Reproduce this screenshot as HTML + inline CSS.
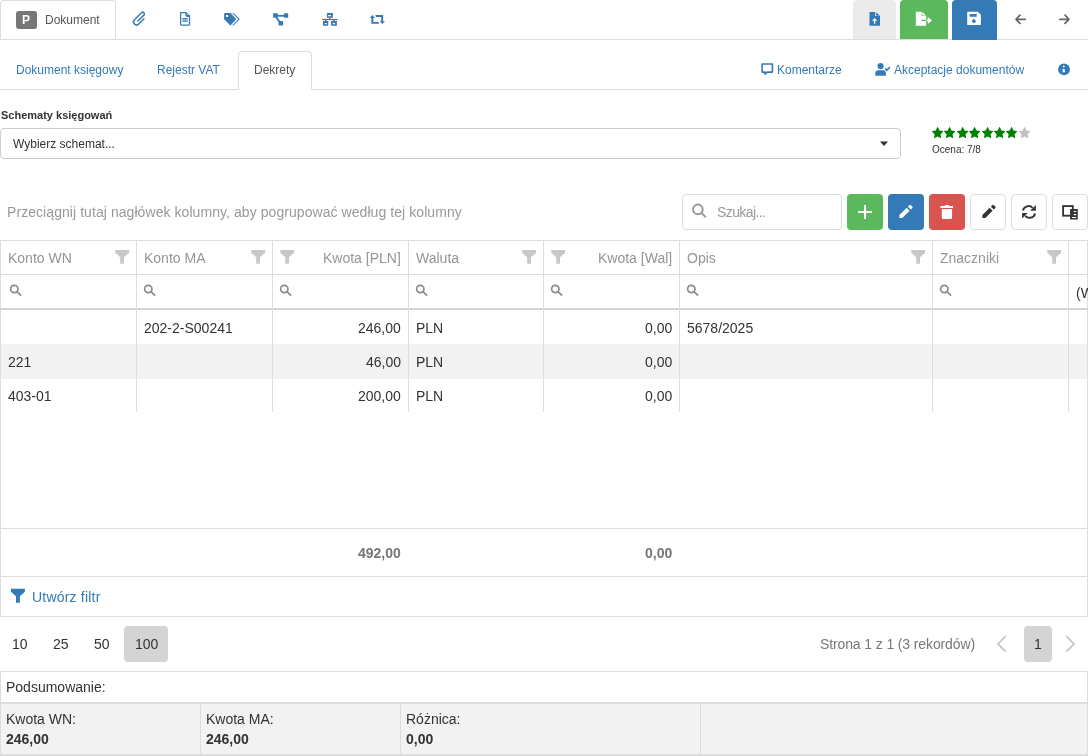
<!DOCTYPE html>
<html><head><meta charset="utf-8">
<style>
*{box-sizing:border-box;margin:0;padding:0}
html,body{width:1088px;height:756px;overflow:hidden;background:#fff;-webkit-font-smoothing:antialiased;font-family:"Liberation Sans",sans-serif;color:#333}
.a{position:absolute}
.t{position:absolute;white-space:nowrap;line-height:1;will-change:transform}
.f12{font-size:12px}
.f14{font-size:14px}
.blue{color:#337ab7}
.hl{position:absolute;height:1px;background:#ddd}
.vl{position:absolute;width:1px;background:#ddd}
.hd{color:#959595}
svg{position:absolute;display:block;overflow:visible}
</style></head><body>
<div class="hl" style="left:0;top:39px;width:1088px"></div>
<div class="a" style="left:0;top:0;width:116px;height:40px;border:1px solid #ddd;border-bottom:none;border-radius:4px 4px 0 0;background:#fff"></div>
<div class="hl" style="left:0;top:39px;width:116px"></div>
<div class="a" style="left:16px;top:11px;width:21px;height:18px;background:#777;border-radius:3px"></div>
<div class="t" style="left:22px;top:14px;font-size:12px;font-weight:bold;color:#fff">P</div>
<div class="t f12" style="left:45px;top:14px;color:#555">Dokument</div>
<svg style="left:130px;top:9px" width="19" height="19" viewBox="0 0 19 19"><g transform="translate(10.1,9.4) rotate(-45) scale(1.13)"><path fill="none" stroke="#337ab7" stroke-width="1.3" stroke-linecap="round" d="M2.2 2.7H-4.4A2.7 2.7 0 0 1 -4.4 -2.7H4.4A1.5 1.5 0 0 1 4.4 0.3H-3"/></g></svg>
<svg style="left:176px;top:9px" width="18" height="19" viewBox="0 0 18 19"><path fill="none" stroke="#337ab7" stroke-width="1.25" stroke-linejoin="round" d="M4.6 3.6h5.2l3.7 3.7v8.2q0 0.5-0.5 0.5h-7.9q-0.5 0-0.5-0.5z"/><path fill="#337ab7" d="M9.4 3.4h1.2l3.4 3.4v1.2h-2.6q-2 0-2-2z"/><circle cx="11.5" cy="5.5" r="0.55" fill="#fff"/><rect x="6.3" y="9.1" width="5.5" height="1.1" fill="#337ab7"/><rect x="6.3" y="11.6" width="5.5" height="1.1" fill="#337ab7"/><rect x="6.5" y="10.2" width="5.1" height="1.4" fill="#337ab7" opacity="0.55"/></svg>
<svg style="left:220px;top:9px" width="24" height="20" viewBox="0 0 24 20"><path fill="#337ab7" fill-rule="evenodd" d="M4.1 5Q4.1 4 5.1 4H10.6L16.2 10.3L10.5 16.6L4.1 10.3ZM5.9 5.9V8.1H8.1V5.9Z"/><path fill="#337ab7" d="M12.2 4H13.6L19.7 10.3L13.4 16.6H12L18.2 10.3Z"/></svg>
<svg style="left:270px;top:10px" width="22" height="18" viewBox="0 0 22 18"><g fill="#337ab7"><rect x="3.1" y="3.2" width="4.8" height="4.5" rx="0.6"/><rect x="13.9" y="3.2" width="4.3" height="4.5" rx="0.6"/><rect x="7.5" y="4.9" width="6.5" height="1.8"/><rect x="8.5" y="11.1" width="4.5" height="4.5" rx="0.6"/></g><path d="M6.3 7.2L9.3 11.5" stroke="#337ab7" stroke-width="1.8"/></svg>
<svg style="left:319px;top:10px" width="22" height="18" viewBox="0 0 22 18"><path fill="#337ab7" fill-rule="evenodd" d="M7.9 3.1h6v4.6h-6zM9.2 4.9v1.4h2.8v-1.4z"/><rect x="10.1" y="7.5" width="1.4" height="1.6" fill="#337ab7"/><rect x="3.1" y="8.9" width="15.4" height="1.2" fill="#337ab7"/><rect x="6" y="10" width="1.4" height="1.2" fill="#337ab7"/><rect x="14.3" y="10" width="1.4" height="1.2" fill="#337ab7"/><path fill="#337ab7" fill-rule="evenodd" d="M4 11h5.2v4.7h-5.2zM5.7 12.9v1.4h2.2v-1.4zM12.1 11h5.8v4.7h-5.8zM13.8 12.9v1.4h2.2v-1.4z"/></svg>
<svg style="left:366px;top:10px" width="24" height="18" viewBox="0 0 24 18"><path fill="#337ab7" d="M3.8 8L6.4 5L9 8H7.3V11.9H12.3L13.2 13.8H5.3V8Z"/><path fill="#337ab7" d="M9.3 5H17.1V11.3H19L16.3 14.1L13.6 11.3H15.2V6.9H10.2Z"/></svg>
<div class="a" style="left:853px;top:0;width:43px;height:39px;background:#ebebeb;border-radius:4px 4px 0 0"></div>
<div class="a" style="left:900px;top:0;width:48px;height:39px;background:#5cb85c;border-radius:4px 4px 0 0"></div>
<div class="a" style="left:952px;top:0;width:45px;height:40px;background:#337ab7;border-radius:4px 4px 0 0"></div>
<svg style="left:864px;top:8px" width="22" height="22" viewBox="0 0 22 22"><path fill="#337ab7" d="M5.5 3.9h5.6v4.2h4.9v9.1q0 0.5-0.5 0.5h-9.5q-0.5 0-0.5-0.5z"/><path fill="#337ab7" d="M12.1 4.2l3.9 3.5h-3.9z"/><path fill="#fff" d="M10.6 9.9l2.6 2.9h-1.9v2.9h-1.4v-2.9h-1.9z"/></svg>
<svg style="left:912px;top:8px" width="24" height="22" viewBox="0 0 24 22"><path fill="#fff" d="M3.8 3.8h5.9v4.1h4.5v3.9h-4.9v1.3h4.9v4.6h-10.4z"/><path fill="#fff" d="M10.4 4l3.8 3.6h-3.8z"/><path fill="#fff" d="M14.2 11.8h1.6v-2.8l4.2 3.5-4.2 3.5v-2.9h-1.6z"/></svg>
<svg style="left:963px;top:8px" width="22" height="22" viewBox="0 0 22 22"><path fill="#fff" fill-rule="evenodd" d="M4.7 3.8h10.2l3 3v9.6q0 0.5-0.5 0.5h-12.7q-0.5 0-0.5-0.5v-12.1q0-0.5 0.5-0.5zM6.7 6.1v2.6h7v-2.6zM10.9 11.2a1.9 1.9 0 1 0 0.01 0z"/></svg>
<svg style="left:1012px;top:12px" width="16" height="14" viewBox="0 0 16 14"><path d="M13.2 7.3H4.2M8 3.2L4 7.3L8 11.4" stroke="#666" stroke-width="1.7" fill="none" stroke-linecap="round" stroke-linejoin="round"/></svg>
<svg style="left:1056px;top:12px" width="16" height="14" viewBox="0 0 16 14"><path d="M3.8 7.3H12.8M9 3.2L13 7.3L9 11.4" stroke="#666" stroke-width="1.7" fill="none" stroke-linecap="round" stroke-linejoin="round"/></svg>
<div class="hl" style="left:0;top:89px;width:1088px"></div>
<div class="t f12 blue" style="left:16px;top:64px">Dokument księgowy</div>
<div class="t f12 blue" style="left:157px;top:64px">Rejestr VAT</div>
<div class="a" style="left:238px;top:51px;width:74px;height:39px;border:1px solid #ddd;border-bottom:none;border-radius:4px 4px 0 0;background:#fff"></div>
<div class="t f12" style="left:254.3px;top:64px;color:#555">Dekrety</div>
<svg style="left:758px;top:60px" width="18" height="18" viewBox="0 0 18 18"><path fill="none" stroke="#337ab7" stroke-width="1.6" stroke-linejoin="round" d="M4.1 4h10.3v8.1h-5.2l-2.2 2v-2h-2.9z"/></svg>
<div class="t f12 blue" style="left:777px;top:64px">Komentarze</div>
<svg style="left:872px;top:60px" width="22" height="18" viewBox="0 0 22 18"><circle cx="8.6" cy="6.1" r="3.1" fill="#337ab7"/><path fill="#337ab7" d="M3.3 15.7v-2.2q0-3.3 3.3-3.3h4q3.3 0 3.3 3.3v2.2z"/><path d="M13.2 8.6l1.6 1.7l3-3.2" stroke="#337ab7" stroke-width="1.6" fill="none"/></svg>
<div class="t f12 blue" style="left:894px;top:64px">Akceptacje dokumentów</div>
<svg style="left:1054px;top:58px" width="20" height="22" viewBox="0 0 20 22"><circle cx="10" cy="11.45" r="5.9" fill="#337ab7"/><circle cx="9.75" cy="8.6" r="1" fill="#fff"/><path fill="#fff" d="M8.6 11.1H10.7V13.3H11.2V14.3H8.4V13.3H8.9V12.1H8.6Z"/></svg>
<div class="t" style="left:1px;top:110px;font-size:11px;font-weight:bold;color:#333">Schematy księgowań</div>
<div class="a" style="left:0;top:128px;width:901px;height:31px;border:1px solid #ccc;border-radius:4px"></div>
<div class="t f12" style="left:13px;top:138px;color:#333">Wybierz schemat...</div>
<svg style="left:879px;top:140px" width="10" height="7" viewBox="0 0 10 7"><path d="M1 1.5H9L5 6Z" fill="#333"/></svg>
<svg style="left:931.9px;top:127px" width="11.20" height="11.20" viewBox="0 32 1664 1587" preserveAspectRatio="none"><path transform="matrix(1 0 0 -1 0 1536)" fill="#008000" d="M1664 889q0 -22 -26 -48l-363 -354l86 -500q1 -7 1 -20q0 -21 -10.5 -35.5t-30.5 -14.5q-19 0 -40 12l-449 236l-449 -236q-22 -12 -40 -12q-21 0 -31.5 14.5t-10.5 35.5q0 6 2 20l86 500l-364 354q-25 27 -25 48q0 37 56 46l502 73l225 455q19 41 49 41t49 -41l225 -455
l502 -73q56 -9 56 -46z"/></svg>
<svg style="left:944.33px;top:127px" width="11.20" height="11.20" viewBox="0 32 1664 1587" preserveAspectRatio="none"><path transform="matrix(1 0 0 -1 0 1536)" fill="#008000" d="M1664 889q0 -22 -26 -48l-363 -354l86 -500q1 -7 1 -20q0 -21 -10.5 -35.5t-30.5 -14.5q-19 0 -40 12l-449 236l-449 -236q-22 -12 -40 -12q-21 0 -31.5 14.5t-10.5 35.5q0 6 2 20l86 500l-364 354q-25 27 -25 48q0 37 56 46l502 73l225 455q19 41 49 41t49 -41l225 -455
l502 -73q56 -9 56 -46z"/></svg>
<svg style="left:956.76px;top:127px" width="11.20" height="11.20" viewBox="0 32 1664 1587" preserveAspectRatio="none"><path transform="matrix(1 0 0 -1 0 1536)" fill="#008000" d="M1664 889q0 -22 -26 -48l-363 -354l86 -500q1 -7 1 -20q0 -21 -10.5 -35.5t-30.5 -14.5q-19 0 -40 12l-449 236l-449 -236q-22 -12 -40 -12q-21 0 -31.5 14.5t-10.5 35.5q0 6 2 20l86 500l-364 354q-25 27 -25 48q0 37 56 46l502 73l225 455q19 41 49 41t49 -41l225 -455
l502 -73q56 -9 56 -46z"/></svg>
<svg style="left:969.19px;top:127px" width="11.20" height="11.20" viewBox="0 32 1664 1587" preserveAspectRatio="none"><path transform="matrix(1 0 0 -1 0 1536)" fill="#008000" d="M1664 889q0 -22 -26 -48l-363 -354l86 -500q1 -7 1 -20q0 -21 -10.5 -35.5t-30.5 -14.5q-19 0 -40 12l-449 236l-449 -236q-22 -12 -40 -12q-21 0 -31.5 14.5t-10.5 35.5q0 6 2 20l86 500l-364 354q-25 27 -25 48q0 37 56 46l502 73l225 455q19 41 49 41t49 -41l225 -455
l502 -73q56 -9 56 -46z"/></svg>
<svg style="left:981.62px;top:127px" width="11.20" height="11.20" viewBox="0 32 1664 1587" preserveAspectRatio="none"><path transform="matrix(1 0 0 -1 0 1536)" fill="#008000" d="M1664 889q0 -22 -26 -48l-363 -354l86 -500q1 -7 1 -20q0 -21 -10.5 -35.5t-30.5 -14.5q-19 0 -40 12l-449 236l-449 -236q-22 -12 -40 -12q-21 0 -31.5 14.5t-10.5 35.5q0 6 2 20l86 500l-364 354q-25 27 -25 48q0 37 56 46l502 73l225 455q19 41 49 41t49 -41l225 -455
l502 -73q56 -9 56 -46z"/></svg>
<svg style="left:994.05px;top:127px" width="11.20" height="11.20" viewBox="0 32 1664 1587" preserveAspectRatio="none"><path transform="matrix(1 0 0 -1 0 1536)" fill="#008000" d="M1664 889q0 -22 -26 -48l-363 -354l86 -500q1 -7 1 -20q0 -21 -10.5 -35.5t-30.5 -14.5q-19 0 -40 12l-449 236l-449 -236q-22 -12 -40 -12q-21 0 -31.5 14.5t-10.5 35.5q0 6 2 20l86 500l-364 354q-25 27 -25 48q0 37 56 46l502 73l225 455q19 41 49 41t49 -41l225 -455
l502 -73q56 -9 56 -46z"/></svg>
<svg style="left:1006.48px;top:127px" width="11.20" height="11.20" viewBox="0 32 1664 1587" preserveAspectRatio="none"><path transform="matrix(1 0 0 -1 0 1536)" fill="#008000" d="M1664 889q0 -22 -26 -48l-363 -354l86 -500q1 -7 1 -20q0 -21 -10.5 -35.5t-30.5 -14.5q-19 0 -40 12l-449 236l-449 -236q-22 -12 -40 -12q-21 0 -31.5 14.5t-10.5 35.5q0 6 2 20l86 500l-364 354q-25 27 -25 48q0 37 56 46l502 73l225 455q19 41 49 41t49 -41l225 -455
l502 -73q56 -9 56 -46z"/></svg>
<svg style="left:1018.91px;top:127px" width="11.20" height="11.20" viewBox="0 32 1664 1587" preserveAspectRatio="none"><path transform="matrix(1 0 0 -1 0 1536)" fill="#c0c0c0" d="M1664 889q0 -22 -26 -48l-363 -354l86 -500q1 -7 1 -20q0 -21 -10.5 -35.5t-30.5 -14.5q-19 0 -40 12l-449 236l-449 -236q-22 -12 -40 -12q-21 0 -31.5 14.5t-10.5 35.5q0 6 2 20l86 500l-364 354q-25 27 -25 48q0 37 56 46l502 73l225 455q19 41 49 41t49 -41l225 -455
l502 -73q56 -9 56 -46z"/></svg>
<div class="t" style="left:932px;top:145px;font-size:10px;color:#333">Ocena: 7/8</div>
<div class="t f14" style="left:7px;top:205px;color:#999;letter-spacing:0.065px">Przeciągnij tutaj nagłówek kolumny, aby pogrupować według tej kolumny</div>
<div class="a" style="left:682px;top:194px;width:160px;height:36px;border:1px solid #ddd;border-radius:4px"></div>
<svg style="left:688px;top:200px" width="24" height="22" viewBox="0 0 24 22"><circle cx="9.9" cy="9.4" r="4.8" stroke="#999" stroke-width="2" fill="none"/><path d="M13.4 12.9L17.9 17.2" stroke="#999" stroke-width="2"/></svg>
<div class="t f14" style="left:717px;top:205px;color:#999;letter-spacing:-0.6px">Szukaj...</div>
<div class="a" style="left:847px;top:194px;width:36px;height:36px;background:#5cb85c;border-radius:4px"></div>
<div class="a" style="left:888px;top:194px;width:36px;height:36px;background:#337ab7;border-radius:4px"></div>
<div class="a" style="left:929px;top:194px;width:36px;height:36px;background:#d9534f;border-radius:4px"></div>
<div class="a" style="left:970px;top:194px;width:36px;height:36px;border:1px solid #ddd;border-radius:4px"></div>
<div class="a" style="left:1011px;top:194px;width:36px;height:36px;border:1px solid #ddd;border-radius:4px"></div>
<div class="a" style="left:1052px;top:194px;width:36px;height:36px;border:1px solid #ddd;border-radius:4px"></div>
<div class="a" style="left:857.8px;top:211px;width:14.3px;height:2.4px;background:#fff"></div>
<div class="a" style="left:863.6px;top:204.9px;width:2.4px;height:14.3px;background:#fff"></div>
<svg style="left:896px;top:202px" width="20" height="20" viewBox="0 0 20 20"><g fill="#fff"><path d="M3.4 15.9v-2.9l7.3-7.2l2.9 2.9l-7.3 7.2z"/><path d="M11.9 4.7l1.6-1.6q0.6-0.6 1.2 0l1.7 1.7q0.6 0.6 0 1.2l-1.6 1.6z"/></g></svg>
<svg style="left:937px;top:202px" width="20" height="20" viewBox="0 0 20 20"><g fill="#fff"><path d="M3.4 4.1h4.5v-1.1h4.1v1.1h4.1v1.9h-12.7z"/><path d="M4.8 7h10.3v8.4q0 1.5-1.5 1.5h-7.3q-1.5 0-1.5-1.5z"/></g></svg>
<svg style="left:978.5px;top:202px" width="20" height="20" viewBox="0 0 20 20"><g fill="#333"><path d="M3.4 15.9v-2.9l7.3-7.2l2.9 2.9l-7.3 7.2z"/><path d="M11.9 4.7l1.6-1.6q0.6-0.6 1.2 0l1.7 1.7q0.6 0.6 0 1.2l-1.6 1.6z"/></g></svg>
<svg style="left:1018px;top:202px" width="22" height="20" viewBox="0 0 22 20"><g fill="none" stroke="#333" stroke-width="1.9"><path d="M4.9 8.4A5.8 5.8 0 0 1 14.6 5.8"/><path d="M17.1 11.4A5.8 5.8 0 0 1 7.3 14"/></g><g fill="#333"><path d="M17.8 3.1v5.7h-5.6z"/><path d="M4.1 16.6v-5.6h5.6z"/></g></svg>
<svg style="left:1059px;top:202px" width="22" height="20" viewBox="0 0 22 20"><rect x="4.1" y="4.1" width="9.7" height="9.6" fill="none" stroke="#333" stroke-width="1.85"/><path fill="#333" fill-rule="evenodd" d="M11.1 7.1h7.7v10.5h-7.7zM13 8.9v1.2h4.2v-1.2zM13 12v1.2h4.2v-1.2zM13 15v1.1h4.2v-1.1z"/></svg>
<div class="a" style="left:0;top:240px;width:1088px;height:377px;border:1px solid #ddd"></div>
<div class="hl" style="left:0;top:274px;width:1088px"></div>
<div class="a" style="left:0;top:308px;width:1088px;height:2px;background:#d3d3d3"></div>
<div class="a" style="left:1px;top:344px;width:1086px;height:35px;background:#f2f2f2"></div>
<div class="vl" style="left:136px;top:240px;height:172px"></div>
<div class="vl" style="left:272px;top:240px;height:172px"></div>
<div class="vl" style="left:408px;top:240px;height:172px"></div>
<div class="vl" style="left:543px;top:240px;height:172px"></div>
<div class="vl" style="left:679px;top:240px;height:172px"></div>
<div class="vl" style="left:932px;top:240px;height:172px"></div>
<div class="vl" style="left:1068px;top:240px;height:172px"></div>
<svg style="left:112px;top:247px" width="20" height="20" viewBox="0 0 20 20"><g fill="#c8c8c8"><path d="M3.2 2.9H17.2V5.7L12 10.3V16.7H8.2V10.3L3.2 5.7Z"/></g></svg>
<svg style="left:248px;top:247px" width="20" height="20" viewBox="0 0 20 20"><g fill="#c8c8c8"><path d="M3.2 2.9H17.2V5.7L12 10.3V16.7H8.2V10.3L3.2 5.7Z"/></g></svg>
<svg style="left:277px;top:247px" width="20" height="20" viewBox="0 0 20 20"><g fill="#c8c8c8"><path d="M3.2 2.9H17.2V5.7L12 10.3V16.7H8.2V10.3L3.2 5.7Z"/></g></svg>
<svg style="left:519px;top:247px" width="20" height="20" viewBox="0 0 20 20"><g fill="#c8c8c8"><path d="M3.2 2.9H17.2V5.7L12 10.3V16.7H8.2V10.3L3.2 5.7Z"/></g></svg>
<svg style="left:548px;top:247px" width="20" height="20" viewBox="0 0 20 20"><g fill="#c8c8c8"><path d="M3.2 2.9H17.2V5.7L12 10.3V16.7H8.2V10.3L3.2 5.7Z"/></g></svg>
<svg style="left:908px;top:247px" width="20" height="20" viewBox="0 0 20 20"><g fill="#c8c8c8"><path d="M3.2 2.9H17.2V5.7L12 10.3V16.7H8.2V10.3L3.2 5.7Z"/></g></svg>
<svg style="left:1044px;top:247px" width="20" height="20" viewBox="0 0 20 20"><g fill="#c8c8c8"><path d="M3.2 2.9H17.2V5.7L12 10.3V16.7H8.2V10.3L3.2 5.7Z"/></g></svg>
<div class="t f14 hd" style="left:8px;top:251px">Konto WN</div>
<div class="t f14 hd" style="left:144px;top:251px">Konto MA</div>
<div class="t f14 hd" style="right:687px;top:251px">Kwota [PLN]</div>
<div class="t f14 hd" style="left:416px;top:251px">Waluta</div>
<div class="t f14 hd" style="right:416px;top:251px">Kwota [Wal]</div>
<div class="t f14 hd" style="left:687px;top:251px">Opis</div>
<div class="t f14 hd" style="left:940px;top:251px">Znaczniki</div>
<svg style="left:4px;top:280px" width="22" height="20" viewBox="0 0 22 20"><circle cx="10.3" cy="9" r="3.65" stroke="#8a8a8a" stroke-width="1.7" fill="none"/><path d="M13 11.7L17.1 15.7" stroke="#8a8a8a" stroke-width="1.7"/></svg>
<svg style="left:138.2px;top:280px" width="22" height="20" viewBox="0 0 22 20"><circle cx="10.3" cy="9" r="3.65" stroke="#8a8a8a" stroke-width="1.7" fill="none"/><path d="M13 11.7L17.1 15.7" stroke="#8a8a8a" stroke-width="1.7"/></svg>
<svg style="left:274.2px;top:280px" width="22" height="20" viewBox="0 0 22 20"><circle cx="10.3" cy="9" r="3.65" stroke="#8a8a8a" stroke-width="1.7" fill="none"/><path d="M13 11.7L17.1 15.7" stroke="#8a8a8a" stroke-width="1.7"/></svg>
<svg style="left:410.2px;top:280px" width="22" height="20" viewBox="0 0 22 20"><circle cx="10.3" cy="9" r="3.65" stroke="#8a8a8a" stroke-width="1.7" fill="none"/><path d="M13 11.7L17.1 15.7" stroke="#8a8a8a" stroke-width="1.7"/></svg>
<svg style="left:545.2px;top:280px" width="22" height="20" viewBox="0 0 22 20"><circle cx="10.3" cy="9" r="3.65" stroke="#8a8a8a" stroke-width="1.7" fill="none"/><path d="M13 11.7L17.1 15.7" stroke="#8a8a8a" stroke-width="1.7"/></svg>
<svg style="left:681.2px;top:280px" width="22" height="20" viewBox="0 0 22 20"><circle cx="10.3" cy="9" r="3.65" stroke="#8a8a8a" stroke-width="1.7" fill="none"/><path d="M13 11.7L17.1 15.7" stroke="#8a8a8a" stroke-width="1.7"/></svg>
<svg style="left:934.2px;top:280px" width="22" height="20" viewBox="0 0 22 20"><circle cx="10.3" cy="9" r="3.65" stroke="#8a8a8a" stroke-width="1.7" fill="none"/><path d="M13 11.7L17.1 15.7" stroke="#8a8a8a" stroke-width="1.7"/></svg>
<div class="t f14" style="left:1076px;top:286px">(Wszystkie)</div>
<div class="t f14" style="left:144px;top:321px">202-2-S00241</div>
<div class="t f14" style="right:687px;top:321px">246,00</div>
<div class="t f14" style="left:416px;top:321px">PLN</div>
<div class="t f14" style="right:416px;top:321px">0,00</div>
<div class="t f14" style="left:687px;top:321px">5678/2025</div>
<div class="t f14" style="left:8px;top:355px">221</div>
<div class="t f14" style="right:687px;top:355px">46,00</div>
<div class="t f14" style="left:416px;top:355px">PLN</div>
<div class="t f14" style="right:416px;top:355px">0,00</div>
<div class="t f14" style="left:8px;top:389px">403-01</div>
<div class="t f14" style="right:687px;top:389px">200,00</div>
<div class="t f14" style="left:416px;top:389px">PLN</div>
<div class="t f14" style="right:416px;top:389px">0,00</div>
<div class="hl" style="left:0;top:528px;width:1088px"></div>
<div class="t f14" style="right:687px;top:546px;font-weight:bold;color:#767676">492,00</div>
<div class="t f14" style="right:416px;top:546px;font-weight:bold;color:#767676">0,00</div>
<div class="hl" style="left:0;top:576px;width:1088px"></div>
<svg style="left:6px;top:586px" width="24" height="20" viewBox="0 0 24 20"><path fill="#337ab7" d="M5 2.8H18.9V5.7L13.9 10.3V16.8H10V10.3L5 5.7Z"/></svg>
<div class="t f14 blue" style="left:32px;top:590px;letter-spacing:0.2px">Utwórz filtr</div>
<div class="t f14" style="left:11.5px;top:637px">10</div>
<div class="t f14" style="left:53px;top:637px">25</div>
<div class="t f14" style="left:94px;top:637px">50</div>
<div class="a" style="left:124px;top:626px;width:44px;height:36px;background:#d4d4d4;border-radius:4px"></div>
<div class="t f14" style="left:135px;top:637px">100</div>
<div class="t f14" style="left:820px;top:637px;color:#777;letter-spacing:-0.12px">Strona 1 z 1 (3 rekordów)</div>
<svg style="left:994px;top:632px" width="16" height="24" viewBox="0 0 16 24"><path d="M11.6 4.2L4 11.9L11.6 19.6" stroke="#c4c4c4" stroke-width="1.7" fill="none"/></svg>
<div class="a" style="left:1024px;top:626px;width:28px;height:36px;background:#d4d4d4;border-radius:4px"></div>
<div class="t f14" style="left:1034px;top:637px">1</div>
<svg style="left:1062px;top:632px" width="16" height="24" viewBox="0 0 16 24"><path d="M4.4 4.2L12 11.9L4.4 19.6" stroke="#c4c4c4" stroke-width="1.7" fill="none"/></svg>
<div class="a" style="left:0;top:671px;width:1088px;height:85px;border:1px solid #ddd;border-bottom:2px solid #ddd;background:#f2f2f2"></div>
<div class="a" style="left:1px;top:672px;width:1086px;height:30px;background:#fff"></div>
<div class="a" style="left:0;top:702px;width:1088px;height:2px;background:#ddd"></div>
<div class="vl" style="left:200px;top:704px;height:50px"></div>
<div class="vl" style="left:400px;top:704px;height:50px"></div>
<div class="vl" style="left:700px;top:704px;height:50px"></div>
<div class="t f14" style="left:6px;top:680px">Podsumowanie:</div>
<div class="t f14" style="left:6px;top:712px">Kwota WN:</div>
<div class="t f14" style="left:6px;top:732px;font-weight:bold">246,00</div>
<div class="t f14" style="left:206px;top:712px">Kwota MA:</div>
<div class="t f14" style="left:206px;top:732px;font-weight:bold">246,00</div>
<div class="t f14" style="left:406px;top:712px">Różnica:</div>
<div class="t f14" style="left:406px;top:732px;font-weight:bold">0,00</div>
</body></html>
